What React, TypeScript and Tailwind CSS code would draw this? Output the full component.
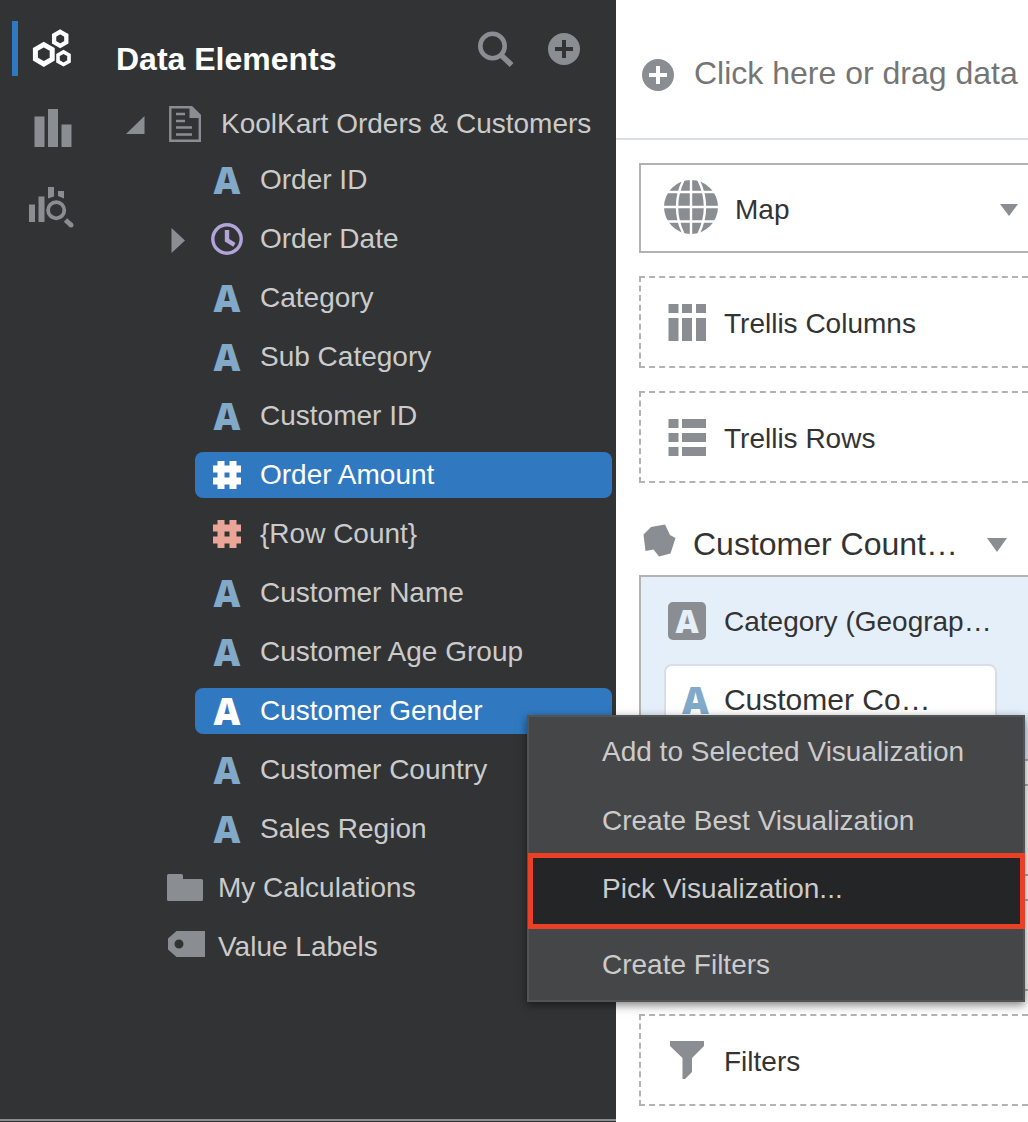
import { useState } from "react";
import type { ReactNode } from "react";

type Kind = "attribute" | "date" | "measure";

interface Element {
  name: string;
  kind: Kind;
  expandable?: boolean;
}

const ELEMENTS: Element[] = [
  { name: "Order ID", kind: "attribute" },
  { name: "Order Date", kind: "date", expandable: true },
  { name: "Category", kind: "attribute" },
  { name: "Sub Category", kind: "attribute" },
  { name: "Customer ID", kind: "attribute" },
  { name: "Order Amount", kind: "measure" },
  { name: "{Row Count}", kind: "measure" },
  { name: "Customer Name", kind: "attribute" },
  { name: "Customer Age Group", kind: "attribute" },
  { name: "Customer Gender", kind: "attribute" },
  { name: "Customer Country", kind: "attribute" },
  { name: "Sales Region", kind: "attribute" },
];

const MENU = [
  { label: "Add to Selected Visualization", style: "block h-[69px] w-full pl-[73px] text-left" },
  { label: "Create Best Visualization", style: "block h-[69px] w-full pl-[73px] text-left" },
  {
    label: "Pick Visualization...",
    style:
      "-mt-[2px] -ml-px block h-[76px] w-[497px] border-5 border-[#ea4025] bg-[#242527] pb-[4px] pl-[69px] text-left",
  },
  { label: "Create Filters", style: "block h-[71px] w-full pl-[73px] text-left" },
];

function LetterIcon({ className }: { className: string }) {
  return (
    <span aria-hidden="true" className={`font-['Open_Sans',sans-serif] font-extrabold ${className}`}>
      A
    </span>
  );
}

function HashIcon({ className }: { className: string }) {
  return (
    <svg width="28" height="28" viewBox="0 0 28 28" className={className} aria-hidden="true">
      <path
        fill="currentColor"
        fillRule="evenodd"
        d="M4.500 0h7v4.500h5V0h7v4.500H28v7h-4.500v5H28v7h-4.500V28h-7v-4.500h-5V28h-7v-4.500H0v-7h4.500v-5H0v-7h4.500zM11.500 11.500v5h5v-5z"
      />
    </svg>
  );
}

function ClockIcon() {
  return (
    <svg width="32" height="32" viewBox="0 0 32 32" fill="none" className="text-[#b3a4d9]" aria-hidden="true">
      <circle cx="16" cy="16" r="14.2" stroke="currentColor" strokeWidth="3.4" />
      <path d="M16 7v10.2l7.4 4.6" stroke="currentColor" strokeWidth="4.4" />
    </svg>
  );
}

function PlusIcon() {
  return (
    <svg width="32" height="32" viewBox="0 0 32 32" aria-hidden="true">
      <path
        fill="#8a8d92"
        fillRule="evenodd"
        d="M16 0a16 16 0 1 1 0 32a16 16 0 0 1 0-32zM14 7v7H7v4h7v7h4v-7h7v-4h-7V7z"
      />
    </svg>
  );
}

function KindIcon({ kind, selected }: { kind: Kind; selected: boolean }) {
  if (kind === "date") return <ClockIcon />;
  if (kind === "measure") return <HashIcon className={selected ? "text-white" : "text-[#e8a598]"} />;
  return <LetterIcon className={`text-[37px] leading-[46px] ${selected ? "text-white" : "text-[#81a9ca]"}`} />;
}

function DownArrow({ size }: { size: "small" | "large" }) {
  return (
    <svg
      width={size === "small" ? 18 : 20}
      height={size === "small" ? 12 : 14}
      viewBox="0 0 20 14"
      preserveAspectRatio="none"
      className="pointer-events-none shrink-0"
      aria-hidden="true"
    >
      <path d="M0 0h20L10 14z" fill="#8a8d92" />
    </svg>
  );
}

function ContextMenu() {
  return (
    <ul
      role="menu"
      className="absolute top-[27px] left-[431px] z-10 w-[498px] border-2 border-[#525355] bg-[#454648] text-[#cbcbcb] shadow-[0_3px_9px_rgba(0,0,0,0.5)]"
    >
      {MENU.map(({ label, style }) => (
        <li key={label} role="none">
          <button role="menuitem" type="button" className={style}>
            {label}
          </button>
        </li>
      ))}
    </ul>
  );
}

function Rail() {
  return (
    <nav aria-label="Panels" className="flex w-[96px] shrink-0 flex-col gap-[24px] pt-[21px] text-[#8a8d92]">
      <button type="button" aria-label="Data" className="ml-[12px] flex h-[55px] items-center border-l-6 border-[#3079c1] pl-[15px]">
        <svg width="38" height="38" viewBox="0 0 38 38" fill="none" stroke="#ffffff" className="overflow-visible" aria-hidden="true">
          <path d="M10.8 14.600l8.400 4.850v9.700l-8.400 4.850l-8.400-4.850v-9.700z" strokeWidth="5" />
          <path d="M27.200 1.800l6.100 3.500v7l-6.100 3.500l-6.100-3.500v-7z" strokeWidth="4.300" />
          <path d="M30.500 21.900l5.500 3.150v6.300l-5.500 3.150l-5.500-3.150v-6.300z" strokeWidth="3.600" />
        </svg>
      </button>
      <button type="button" aria-label="Visualizations" className="flex h-[55px] items-center pl-[34px]">
        <svg width="38" height="38" viewBox="0 0 38 38" fill="currentColor" aria-hidden="true">
          <path d="M0.5 7.5h10V38h-10zM14 0h10v38H14zM27.5 15.5h10V38h-10z" />
        </svg>
      </button>
      <button type="button" aria-label="Analytics" className="flex h-[55px] items-center pl-[28px]">
        <svg width="46" height="42" viewBox="0 0 46 42" fill="none" aria-hidden="true">
          <path fill="currentColor" d="M1 18.500h6V36H1zM10.500 10.500h6V36h-6zM20 1h6v9.500l-6 2zM30 5h6v7.500l-6-2.500z" />
          <circle cx="28.200" cy="24.200" r="8.100" stroke="currentColor" strokeWidth="3.800" />
          <path d="M37.500 34l5.500 5" stroke="currentColor" strokeWidth="5" />
          <circle cx="43" cy="39" r="2.500" fill="currentColor" />
        </svg>
      </button>
    </nav>
  );
}

function DataPanel() {
  const [selected, setSelected] = useState<string[]>(["Order Amount", "Customer Gender"]);
  const toggle = (name: string) =>
    setSelected((s) => (s.includes(name) ? s.filter((n) => n !== name) : [...s, name]));

  return (
    <section className="min-w-0 flex-1">
      <header className="flex h-[101px] items-start pt-[31px] pr-[36px] pl-[20px]">
        <h1 className="flex-1 pt-[8px] text-[32px] leading-[40px] font-bold text-white">Data Elements</h1>
        <button type="button" aria-label="Search" className="mr-[34px]">
          <svg width="36" height="36" viewBox="0 0 36 36" fill="none" stroke="#8a8d92" aria-hidden="true">
            <circle cx="14.500" cy="15" r="12.200" strokeWidth="4.600" />
            <path d="M22.500 23.600L33.600 34" strokeWidth="5.500" />
          </svg>
        </button>
        <button type="button" aria-label="Add" className="mt-[2px]">
          <PlusIcon />
        </button>
      </header>

      <div className="mb-[10px] flex h-[46px] items-center pl-[30px]">
        <button type="button" aria-label="Collapse KoolKart Orders & Customers" className="mr-[24px]">
          <svg width="19" height="18" viewBox="0 0 19 18" className="mt-[2px]" aria-hidden="true">
            <path d="M18.500 0v18H0z" fill="#8a8d92" />
          </svg>
        </button>
        <svg width="33" height="36" viewBox="0 0 33 36" fill="none" className="mr-[19px]" aria-hidden="true">
          <path d="M1.300 1.300h21l8.500 8.500v24.900H1.300z" stroke="#8a8d92" strokeWidth="2.400" />
          <path d="M20.500 0.500h3L32 9v3H20.500z" fill="#8a8d92" />
          <path d="M7 8h9M7 15h9M7 21.500h16M7 28.500h16" stroke="#8a8d92" strokeWidth="2.400" />
        </svg>
        <span className="whitespace-nowrap">KoolKart Orders &amp; Customers</span>
      </div>

      <ul>
        {ELEMENTS.map(({ name, kind, expandable }) => {
          const active = selected.includes(name);
          return (
            <li key={name} className="relative mb-[13px] flex h-[46px] items-center pr-[4px]">
              <div className="flex w-[99px] shrink-0 pl-[75px]">
                {expandable && (
                  <button type="button" aria-label={`Expand ${name}`}>
                    <svg width="14" height="25" viewBox="0 0 14 25" className="mt-[2px]" aria-hidden="true">
                      <path d="M0.500 0L14 12.500L0.500 25z" fill="#8a8d92" />
                    </svg>
                  </button>
                )}
              </div>
              <button
                type="button"
                aria-pressed={active}
                onClick={() => toggle(name)}
                className={`flex h-[46px] min-w-0 flex-1 items-center gap-[17px] rounded-lg pl-[16px] ${
                  active ? "bg-[#3079c1] text-white" : ""
                }`}
              >
                <span className="flex w-[32px] justify-center">
                  <KindIcon kind={kind} selected={active} />
                </span>
                {name}
              </button>
              {name === "Customer Gender" && <ContextMenu />}
            </li>
          );
        })}
        <li className="mb-[13px] flex h-[46px] items-center pl-[71px]">
          <svg width="36" height="28" viewBox="0 0 36 28" className="mr-[15px]" aria-hidden="true">
            <path d="M1.500 0h13q1.500 0 1.500 1.500V5h18.500q1.500 0 1.500 1.500v19q0 1.500-1.500 1.500h-33q-1.500 0-1.500-1.500v-24Q0 0 1.500 0z" fill="#8a8d92" />
          </svg>
          My Calculations
        </li>
        <li className="flex h-[46px] items-center pl-[71px]">
          <svg width="38" height="32" viewBox="0 0 38 32" className="mr-[13px]" aria-hidden="true">
            <path
              fillRule="evenodd"
              d="M9.500 0H38v26H9.500L1 18.500v-11zM12 8.500a4.500 4.500 0 1 0 0 9a4.500 4.500 0 0 0 0-9z"
              fill="#8a8d92"
            />
          </svg>
          Value Labels
        </li>
      </ul>
    </section>
  );
}

function DropTarget({ icon, label }: { icon: ReactNode; label: string }) {
  return (
    <button
      type="button"
      className="flex h-[92px] w-full items-center border-2 border-r-0 border-dashed border-[#b3b3b3] pl-[27px] text-left"
    >
      <span className="flex w-[56px] shrink-0">{icon}</span>
      <span className="pt-[3px]">{label}</span>
    </button>
  );
}

function GlobeIcon() {
  return (
    <svg width="54" height="54" viewBox="0 0 54 54" fill="none" className="mb-[2px] shrink-0" aria-hidden="true">
      <circle cx="27" cy="27" r="27" fill="#8a8d92" />
      <g stroke="#ffffff" strokeWidth="2.400">
        <path d="M27 0v54M0 27h54M0 12h54M0 41.500h54" />
        <path d="M19.500 0Q6.500 27 19.500 54M34.500 0Q47.500 27 34.500 54" />
      </g>
    </svg>
  );
}

function GrammarPanel() {
  return (
    <main className="min-w-0 flex-1 overflow-hidden bg-white text-[#333333]">
      <button
        type="button"
        className="flex h-[140px] w-full items-center gap-[20px] border-b-2 border-[#d9dfe5] pt-[12px] pl-[26px] text-[32px] whitespace-nowrap text-[#757575]"
      >
        <span className="shrink-0">
          <PlusIcon />
        </span>
        <span className="-mt-[4px]">Click here or drag data</span>
      </button>

      <div className="flex flex-col gap-[23px] pt-[23px] pb-[16px] pl-[23px]">
        <label className="flex h-[90px] items-center border-2 border-r-0 border-[#b3b3b3] pr-[10px] pl-[23px]">
          <GlobeIcon />
          <select aria-label="Visualization type" className="ml-[17px] min-w-0 flex-1 appearance-none bg-transparent pt-[3px]">
            <option>Map</option>
          </select>
          <span className="pt-[4px]">
            <DownArrow size="small" />
          </span>
        </label>

        <DropTarget
          label="Trellis Columns"
          icon={
            <svg width="38" height="37" viewBox="0 0 38 37" aria-hidden="true">
              <path d="M.5 0h10v9H.5zM14 0h10v9H14zM28 0h10v9H28zM.5 14h10v23H.5zM14 14h10v23H14zM28 14h10v23H28z" fill="#8a8d92" />
            </svg>
          }
        />
        <DropTarget
          label="Trellis Rows"
          icon={
            <svg width="38" height="37" viewBox="0 0 38 37" aria-hidden="true">
              <path d="M.5 0h10v9H.5zM14 0h24v9H14zM.5 14h10v9H.5zM14 14h24v9H14zM.5 28h10v9H.5zM14 28h24v9H14z" fill="#8a8d92" />
            </svg>
          }
        />

        <section>
          <button type="button" className="mt-[14px] flex h-[55px] w-full items-start pr-[21px] pl-[4px] text-[32px] leading-[48px]">
            <svg width="33" height="33" viewBox="0 0 33 33" className="mt-[4px] mr-[17px] shrink-0" aria-hidden="true">
              <path d="M0.500 10.500L8 3L22 .5l5 10.500l5.500 3L27.500 29.500L16 32.500L10.500 25.500L2.500 27z" fill="#8a8d92" />
            </svg>
            <span className="min-w-0 flex-1 truncate text-left">Customer Count…</span>
            <span className="flex h-[50px] items-center">
              <DownArrow size="large" />
            </span>
          </button>
          <div className="h-[186px] border-2 border-r-0 border-[#b3b3b3] bg-[#e4eff9] pr-[31px] pl-[23px]">
            <div className="flex h-[87px] items-center pl-[4px]">
              <span className="mr-[18px] flex size-[38px] shrink-0 items-center justify-center rounded-[5px] bg-[#8a8d92]">
                <LetterIcon className="text-[32px] leading-[38px] text-[#e4eff9]" />
              </span>
              <span className="pt-[3px] whitespace-nowrap">Category (Geograp…</span>
            </div>
            <button
              type="button"
              className="flex h-[72px] w-full items-center gap-[15px] rounded-lg border-2 border-[#d9dfe5] bg-white pl-[16px] text-[30px] whitespace-nowrap"
            >
              <LetterIcon className="text-[37px] leading-[46px] text-[#81a9ca]" />
              Customer Co…
            </button>
          </div>
        </section>

        <div className="h-[92px] border-2 border-r-0 border-[#b3b3b3]" />
        <div className="h-[92px] border-2 border-r-0 border-[#b3b3b3]" />

        <DropTarget
          label="Filters"
          icon={
            <svg width="38" height="38" viewBox="0 0 38 38" aria-hidden="true">
              <path d="M2 0h34v5L24 17v14l-7 7h-2.500V17L2 5z" fill="#8a8d92" />
            </svg>
          }
        />
      </div>
    </main>
  );
}

export default function App() {
  return (
    <div className="flex min-h-screen font-['Liberation_Sans',Arial,sans-serif] text-[28px] leading-[46px]">
      <aside className="relative z-10 flex w-[616px] shrink-0 flex-col bg-[#323335] text-[#cbcbcb]">
        <div className="flex flex-1">
          <Rail />
          <DataPanel />
        </div>
        <div className="mb-px h-[2px] bg-[#8a8d92]" />
      </aside>
      <GrammarPanel />
    </div>
  );
}
